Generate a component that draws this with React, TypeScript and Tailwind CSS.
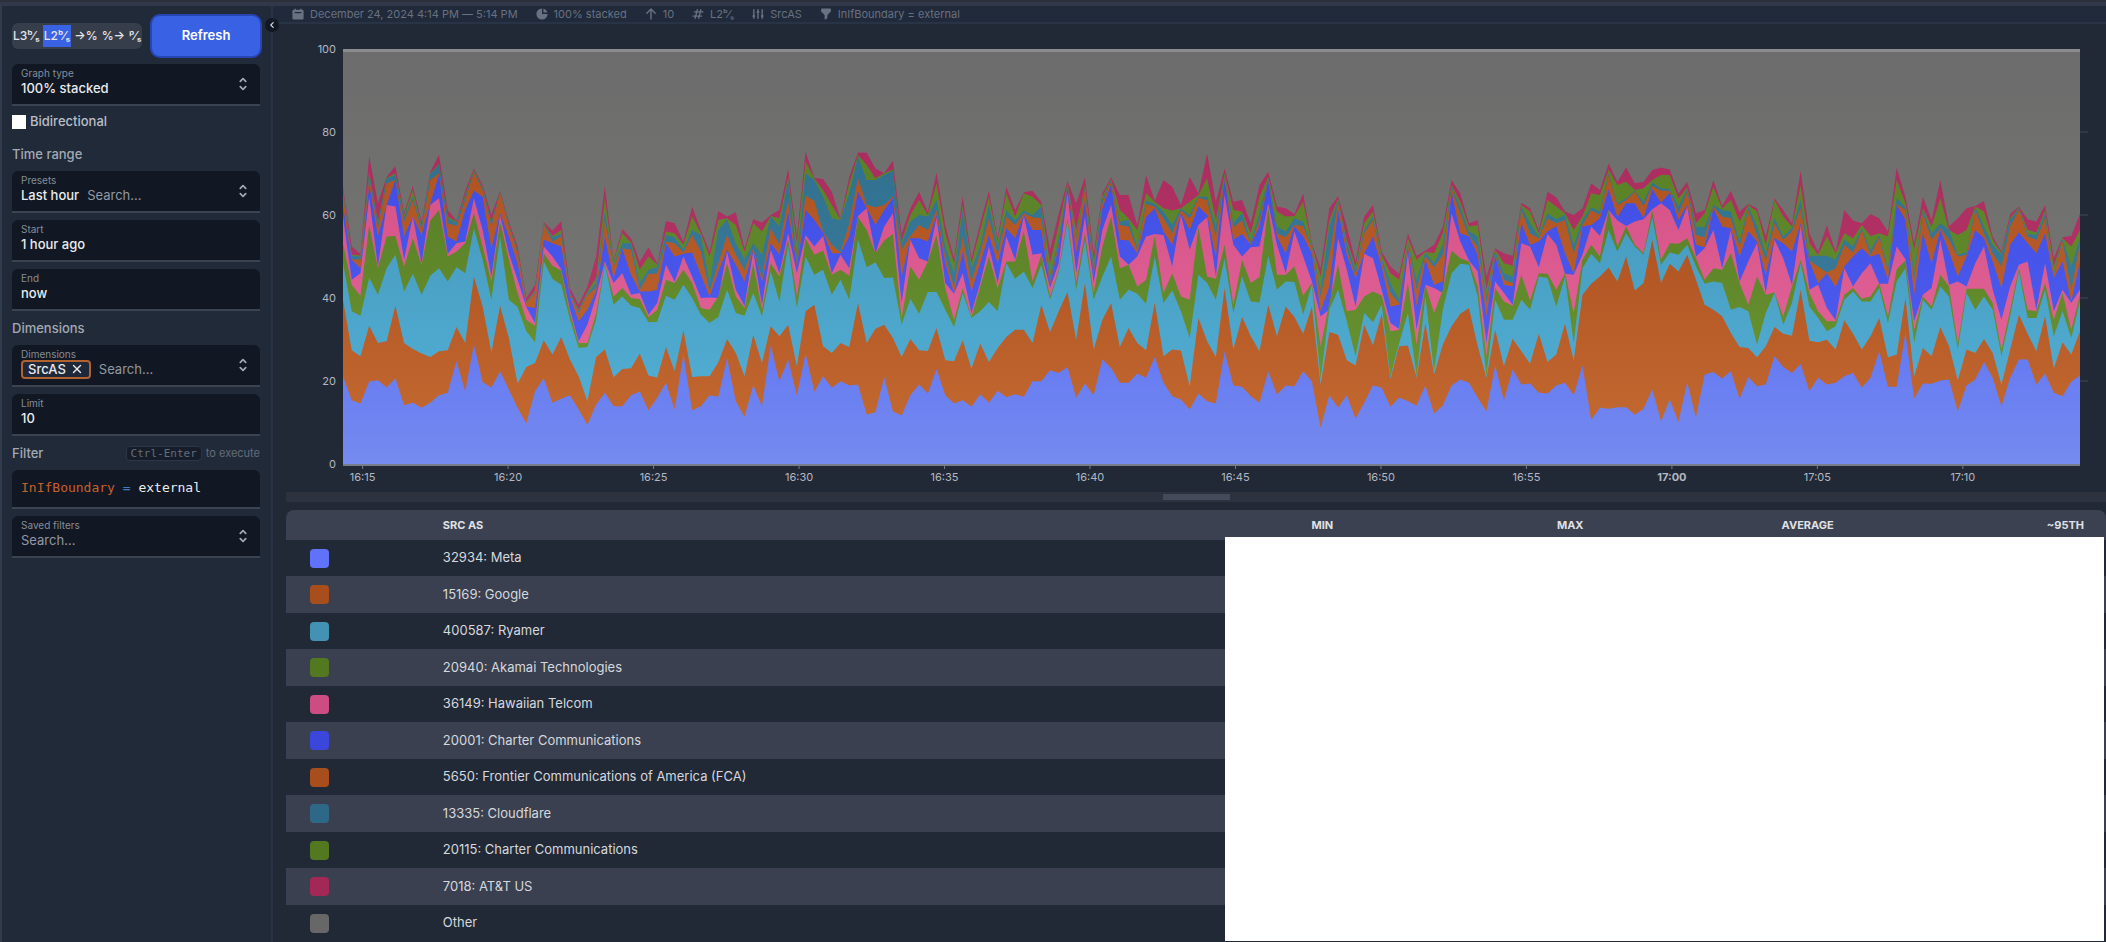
import React from 'react'
import {
  HiAdjustments,
  HiArrowUp,
  HiCalendar,
  HiChartPie,
  HiChevronLeft,
  HiFilter,
  HiHashtag,
  HiSelector,
  HiX,
} from 'react-icons/hi'

// upper edge of each stacked band, one value per sample, FULL_SCALE being 100%
const FULL_SCALE = 1248
const LAST_SAMPLE = 199

const bands = [
  {
    id: 'att',
    from: '#ab2d5f',
    to: '#be3a70',
    levels: [
      834, 654, 632, 926, 784, 864, 896, 756, 837, 729, 879, 930, 764, 732, 822, 889, 839, 749, 822, 729, 654, 499, 539, 727,
      702, 730, 529, 479, 534, 624, 837, 614, 707, 679, 609, 652, 604, 731, 724, 669, 774, 704, 639, 761, 744, 757, 649, 737,
      726, 749, 764, 887, 684, 939, 861, 857, 819, 739, 864, 937, 936, 889, 874, 912, 694, 769, 819, 759, 876, 719, 619, 807,
      619, 724, 822, 679, 834, 764, 817, 822, 789, 644, 754, 851, 784, 862, 634, 814, 862, 809, 809, 719, 869, 792, 854, 834,
      779, 864, 814, 934, 789, 889, 789, 794, 724, 839, 879, 774, 769, 752, 814, 664, 589, 769, 806, 714, 609, 744, 779, 639,
      594, 572, 694, 626, 642, 659, 714, 854, 814, 724, 734, 564, 649, 634, 626, 786, 769, 704, 819, 802, 759, 749, 769, 844,
      824, 904, 849, 892, 844, 849, 884, 892, 886, 814, 849, 754, 764, 854, 776, 822, 759, 782, 769, 684, 799, 764, 724, 882,
      694, 639, 719, 639, 764, 732, 724, 752, 739, 699, 891, 804, 664, 804, 734, 854, 714, 739, 769, 776, 791, 684, 639, 752,
      774, 736, 729, 779, 619, 682, 686, 754,
    ],
  },
  {
    id: 'charter-20115',
    from: '#5a8127',
    to: '#6a9432',
    levels: [
      824, 629, 627, 879, 729, 861, 874, 749, 824, 719, 874, 902, 744, 729, 809, 884, 832, 729, 818, 721, 642, 489, 522, 723,
      686, 704, 516, 464, 519, 559, 799, 609, 694, 666, 584, 624, 599, 699, 694, 659, 744, 694, 624, 734, 739, 719, 639, 724,
      699, 746, 739, 864, 664, 909, 859, 824, 779, 736, 844, 929, 899, 859, 874, 886, 669, 749, 794, 749, 844, 694, 604, 779,
      604, 704, 804, 669, 814, 744, 814, 804, 779, 604, 719, 844, 704, 839, 614, 804, 857, 764, 739, 704, 814, 789, 769, 762,
      769, 789, 809, 859, 734, 874, 764, 759, 694, 804, 864, 759, 744, 746, 789, 659, 564, 734, 799, 674, 594, 724, 759, 629,
      574, 554, 679, 614, 638, 634, 694, 839, 789, 714, 719, 524, 644, 604, 596, 779, 759, 694, 794, 774, 754, 704, 744, 814,
      809, 886, 839, 849, 824, 829, 854, 869, 869, 799, 832, 724, 754, 834, 768, 794, 729, 779, 759, 659, 794, 744, 714, 839,
      664, 629, 684, 634, 694, 679, 719, 686, 694, 684, 854, 784, 644, 769, 714, 799, 704, 689, 704, 774, 759, 674, 634, 739,
      771, 704, 696, 764, 594, 679, 654, 704,
    ],
  },
  {
    id: 'cloudflare',
    from: '#31708f',
    to: '#4187a8',
    levels: [
      819, 626, 624, 874, 724, 859, 869, 744, 804, 714, 872, 899, 739, 726, 804, 879, 829, 724, 816, 719, 639, 486, 519, 721,
      682, 692, 514, 459, 514, 544, 759, 599, 664, 664, 544, 584, 592, 689, 682, 644, 704, 689, 544, 704, 736, 664, 616, 664,
      629, 744, 714, 854, 624, 874, 854, 804, 739, 734, 814, 924, 854, 854, 869, 882, 664, 729, 749, 744, 794, 654, 574, 764,
      589, 654, 779, 654, 764, 732, 762, 749, 774, 564, 679, 839, 684, 829, 594, 794, 854, 729, 734, 654, 792, 782, 759, 719,
      769, 749, 804, 804, 714, 864, 724, 754, 669, 754, 859, 714, 699, 739, 729, 654, 524, 714, 794, 664, 584, 704, 744, 619,
      544, 494, 669, 554, 636, 604, 659, 834, 774, 699, 684, 504, 639, 574, 564, 774, 724, 684, 754, 736, 749, 659, 734, 771,
      759, 874, 784, 799, 821, 789, 846, 829, 826, 774, 826, 714, 712, 779, 764, 759, 669, 774, 714, 634, 739, 684, 709, 794,
      626, 626, 626, 614, 674, 654, 709, 644, 689, 589, 799, 772, 574, 764, 694, 724, 704, 629, 636, 772, 714, 659, 629, 734,
      768, 692, 689, 754, 574, 676, 594, 679,
    ],
  },
  {
    id: 'frontier',
    from: '#b05422',
    to: '#c26a32',
    levels: [
      814, 616, 614, 859, 709, 844, 854, 729, 794, 704, 854, 874, 724, 716, 794, 876, 824, 714, 814, 714, 634, 484, 514, 719,
      669, 684, 509, 454, 509, 530, 734, 594, 649, 644, 524, 571, 574, 669, 664, 636, 689, 639, 519, 604, 689, 629, 584, 649,
      559, 709, 659, 792, 604, 807, 792, 699, 659, 636, 724, 859, 779, 772, 779, 804, 644, 686, 719, 704, 764, 624, 534, 684,
      549, 634, 739, 629, 744, 719, 754, 742, 739, 549, 664, 834, 674, 824, 574, 784, 849, 719, 714, 644, 782, 774, 739, 694,
      764, 739, 801, 794, 684, 859, 712, 732, 662, 734, 854, 694, 682, 719, 716, 649, 504, 624, 789, 644, 569, 694, 734, 609,
      514, 484, 664, 524, 626, 592, 629, 829, 754, 686, 654, 484, 629, 554, 544, 764, 694, 679, 739, 724, 734, 634, 719, 764,
      749, 869, 779, 794, 819, 776, 836, 822, 822, 754, 819, 689, 682, 774, 744, 739, 654, 764, 689, 614, 724, 674, 699, 769,
      612, 594, 576, 589, 659, 636, 704, 629, 682, 579, 782, 764, 554, 754, 674, 709, 674, 624, 629, 764, 694, 634, 594, 714,
      764, 684, 674, 739, 569, 669, 524, 664,
    ],
  },
  {
    id: 'charter-20001',
    from: '#404ee6',
    to: '#5666f2',
    levels: [
      774, 614, 589, 839, 684, 779, 854, 684, 744, 689, 784, 869, 684, 669, 764, 822, 804, 649, 754, 684, 604, 474, 469, 674,
      664, 654, 504, 429, 464, 519, 684, 559, 649, 569, 519, 519, 524, 664, 624, 632, 636, 569, 504, 579, 644, 599, 549, 644,
      549, 664, 629, 756, 594, 764, 734, 696, 634, 634, 684, 819, 770, 719, 764, 799, 564, 679, 679, 669, 749, 604, 514, 639,
      519, 604, 689, 604, 709, 679, 749, 704, 704, 539, 654, 829, 634, 789, 564, 769, 839, 674, 672, 634, 742, 769, 699, 659,
      754, 704, 774, 749, 624, 854, 674, 692, 659, 714, 849, 684, 634, 714, 684, 634, 459, 534, 764, 629, 559, 634, 684, 594,
      474, 479, 649, 474, 614, 539, 549, 819, 694, 684, 629, 444, 624, 539, 534, 724, 659, 669, 699, 716, 634, 572, 714, 719,
      739, 826, 742, 784, 784, 739, 826, 786, 816, 734, 779, 659, 652, 769, 714, 709, 624, 699, 669, 569, 679, 664, 639, 724,
      609, 544, 574, 532, 594, 624, 649, 624, 632, 554, 779, 734, 509, 694, 604, 704, 639, 564, 624, 704, 679, 609, 529, 659,
      696, 664, 634, 694, 559, 609, 489, 609,
    ],
  },
  {
    id: 'hawaiian',
    from: '#d65488',
    to: '#ea6ba2',
    levels: [
      744, 554, 574, 804, 594, 779, 774, 614, 744, 604, 779, 799, 632, 664, 669, 799, 704, 564, 749, 634, 554, 472, 424, 654,
      624, 586, 464, 369, 419, 504, 609, 544, 574, 509, 514, 449, 484, 599, 549, 624, 564, 499, 501, 499, 639, 524, 476, 639,
      479, 644, 574, 694, 574, 689, 654, 686, 574, 629, 589, 746, 769, 634, 714, 754, 484, 674, 619, 609, 742, 544, 512, 574,
      454, 544, 654, 544, 684, 614, 746, 629, 634, 529, 604, 814, 574, 744, 544, 704, 779, 624, 599, 624, 684, 692, 689, 594,
      749, 644, 719, 742, 564, 809, 659, 624, 652, 654, 784, 659, 574, 699, 624, 549, 444, 464, 679, 584, 474, 632, 619, 524,
      424, 406, 634, 404, 539, 529, 514, 754, 669, 612, 579, 364, 549, 514, 479, 664, 654, 592, 692, 659, 572, 569, 629, 714,
      686, 764, 732, 716, 729, 736, 766, 784, 764, 704, 774, 624, 649, 704, 589, 704, 549, 609, 664, 514, 674, 619, 539, 719,
      524, 539, 469, 432, 589, 534, 574, 604, 542, 542, 654, 616, 429, 509, 529, 674, 539, 549, 534, 604, 654, 524, 434, 534,
      599, 609, 464, 604, 459, 524, 484, 524,
    ],
  },
  {
    id: 'akamai',
    from: '#5a8127',
    to: '#719c36',
    levels: [
      664, 539, 506, 719, 589, 684, 686, 594, 679, 599, 732, 764, 624, 639, 664, 754, 654, 549, 729, 614, 514, 434, 416, 634,
      596, 582, 454, 364, 364, 454, 604, 504, 529, 499, 496, 442, 464, 554, 544, 584, 544, 469, 464, 504, 604, 504, 469, 604,
      464, 604, 564, 674, 504, 679, 629, 642, 569, 584, 566, 742, 704, 634, 672, 692, 439, 594, 554, 609, 689, 529, 434, 529,
      442, 534, 624, 529, 609, 609, 699, 549, 629, 504, 584, 739, 544, 694, 514, 654, 744, 589, 599, 534, 554, 686, 514, 574,
      504, 494, 712, 564, 557, 659, 479, 614, 544, 562, 772, 569, 569, 594, 507, 544, 354, 484, 599, 459, 464, 504, 519, 507,
      399, 404, 544, 359, 539, 454, 524, 642, 619, 609, 534, 324, 529, 489, 476, 569, 492, 574, 572, 524, 574, 454, 614, 659,
      624, 764, 654, 714, 659, 634, 762, 614, 664, 662, 679, 619, 554, 589, 584, 634, 544, 479, 564, 509, 516, 444, 534, 614,
      514, 459, 429, 429, 509, 529, 497, 504, 544, 444, 586, 612, 404, 504, 474, 569, 534, 364, 527, 527, 527, 484, 344, 464,
      589, 464, 459, 544, 434, 514, 404, 509,
    ],
  },
  {
    id: 'ryamer',
    from: '#479bc0',
    to: '#55b4d9',
    levels: [
      604, 459, 446, 559, 509, 589, 629, 519, 572, 509, 566, 589, 549, 592, 574, 709, 614, 494, 684, 494, 472, 399, 366, 609,
      556, 539, 434, 349, 352, 434, 599, 479, 504, 476, 469, 426, 428, 506, 494, 539, 499, 449, 424, 442, 524, 454, 446, 514,
      444, 579, 489, 659, 469, 624, 569, 584, 509, 554, 494, 674, 592, 607, 559, 561, 419, 496, 452, 517, 517, 464, 412, 514,
      439, 459, 487, 459, 604, 557, 579, 529, 599, 494, 579, 729, 524, 674, 494, 564, 624, 494, 524, 512, 482, 624, 484, 522,
      459, 379, 569, 544, 494, 619, 454, 564, 489, 486, 626, 524, 549, 547, 449, 539, 254, 464, 524, 429, 324, 454, 426, 479,
      264, 364, 454, 264, 504, 279, 464, 574, 602, 599, 504, 264, 494, 434, 434, 494, 464, 564, 559, 474, 564, 364, 589, 632,
      604, 704, 639, 694, 654, 629, 742, 599, 636, 629, 659, 594, 542, 549, 544, 464, 472, 459, 359, 454, 514, 419, 484, 604,
      474, 439, 399, 414, 494, 519, 489, 489, 529, 424, 549, 589, 364, 494, 464, 534, 504, 344, 514, 464, 504, 464, 324, 444,
      579, 439, 439, 524, 384, 459, 379, 489,
    ],
  },
  {
    id: 'google',
    from: '#b05422',
    to: '#c66c33',
    levels: [
      494, 342, 324, 416, 364, 369, 476, 364, 346, 332, 322, 339, 342, 412, 364, 562, 474, 336, 476, 379, 242, 292, 304, 372,
      329, 382, 314, 264, 189, 322, 344, 261, 286, 288, 332, 266, 260, 352, 279, 402, 262, 264, 264, 306, 376, 334, 264, 389,
      304, 414, 384, 419, 294, 459, 479, 354, 334, 364, 352, 484, 364, 407, 419, 379, 322, 376, 342, 340, 409, 312, 309, 372,
      287, 362, 307, 349, 382, 404, 404, 364, 479, 397, 459, 517, 374, 544, 344, 434, 484, 352, 409, 364, 342, 486, 324, 344,
      341, 234, 439, 369, 322, 529, 344, 442, 384, 339, 479, 384, 474, 442, 392, 474, 239, 397, 389, 312, 296, 419, 357, 452,
      256, 354, 356, 259, 424, 269, 359, 414, 452, 469, 354, 259, 404, 294, 377, 339, 302, 392, 307, 329, 422, 312, 509, 542,
      564, 591, 549, 624, 522, 544, 674, 544, 602, 579, 629, 554, 479, 464, 444, 394, 352, 349, 321, 354, 412, 392, 386, 524,
      371, 366, 374, 344, 432, 392, 344, 384, 439, 321, 329, 499, 264, 349, 324, 412, 354, 252, 344, 334, 376, 334, 239, 344,
      449, 392, 339, 444, 287, 366, 329, 399,
    ],
  },
  {
    id: 'meta',
    from: '#6377f3',
    to: '#758bee',
    levels: [
      264, 192, 182, 248, 252, 230, 258, 177, 184, 169, 184, 207, 214, 309, 219, 359, 246, 230, 279, 224, 169, 122, 219, 258,
      184, 196, 207, 164, 118, 179, 214, 174, 174, 207, 218, 162, 199, 244, 164, 329, 162, 174, 207, 202, 319, 189, 142, 237,
      174, 356, 249, 314, 206, 332, 217, 264, 229, 249, 236, 239, 149, 156, 262, 159, 146, 207, 239, 212, 286, 207, 182, 192,
      172, 210, 184, 220, 201, 210, 202, 249, 249, 282, 274, 292, 199, 242, 207, 314, 289, 244, 244, 272, 259, 322, 244, 204,
      194, 164, 212, 189, 182, 339, 236, 232, 204, 184, 279, 209, 236, 234, 279, 249, 109, 207, 169, 207, 137, 184, 237, 229,
      172, 200, 189, 176, 236, 152, 176, 236, 254, 244, 199, 159, 296, 192, 284, 239, 242, 214, 212, 236, 244, 207, 296, 132,
      169, 166, 171, 171, 148, 166, 224, 128, 194, 126, 246, 139, 269, 277, 257, 279, 196, 262, 234, 239, 324, 292, 274, 301,
      219, 259, 239, 244, 264, 274, 229, 259, 339, 232, 232, 394, 197, 242, 241, 251, 254, 159, 236, 254, 307, 259, 174, 259,
      314, 314, 239, 272, 214, 204, 247, 266,
    ],
  },
]

const rows = [
  { name: '32934: Meta', swatch: 'bg-[#6072fa]' },
  { name: '15169: Google', swatch: 'bg-[#a74e1c]' },
  { name: '400587: Ryamer', swatch: 'bg-[#4392b4]' },
  { name: '20940: Akamai Technologies', swatch: 'bg-[#527820]' },
  { name: '36149: Hawaiian Telcom', swatch: 'bg-[#cd4c81]' },
  { name: '20001: Charter Communications', swatch: 'bg-[#3b47da]' },
  { name: '5650: Frontier Communications of America (FCA)', swatch: 'bg-[#a74e1c]' },
  { name: '13335: Cloudflare', swatch: 'bg-[#2d6886]' },
  { name: '20115: Charter Communications', swatch: 'bg-[#527820]' },
  { name: '7018: AT&T US', swatch: 'bg-[#a32855]' },
  { name: 'Other', swatch: 'bg-[#676767]' },
]

const timeTicks = ['16:15', '16:20', '16:25', '16:30', '16:35', '16:40', '16:45', '16:50', '16:55', '17:00', '17:05', '17:10']

const units = ['L3ᵇ⁄ₛ', 'L2ᵇ⁄ₛ', '→%', '%→', 'ᵖ⁄ₛ']

const summary = [
  { icon: HiCalendar, text: 'December 24, 2024 4:14 PM — 5:14 PM' },
  { icon: HiChartPie, text: '100% stacked' },
  { icon: HiArrowUp, text: '10' },
  { icon: HiHashtag, text: 'L2ᵇ⁄ₛ' },
  { icon: HiAdjustments, text: 'SrcAS' },
  { icon: HiFilter, text: 'InIfBoundary = external' },
]

const bandPath = (levels: number[]) =>
  `M0 ${FULL_SCALE}` + levels.map((level, i) => `L${i} ${FULL_SCALE - level}`).join('') + `L${LAST_SAMPLE} ${FULL_SCALE}Z`

type FieldProps = {
  id: string
  label: string
  selector?: boolean
  children: React.ReactNode
}

const Field = ({ id, label, selector, children }: FieldProps) => (
  <div className="flex h-[42px] items-center rounded-t-md border-b-2 border-[#3b4351] bg-[#111824] pl-[9px] pr-2">
    <div className="flex min-w-0 flex-1 flex-col pb-1">
      <label htmlFor={id} className="text-[10px] leading-3 text-[#868c97]">{label}</label>
      <div className="flex h-[18px] items-center gap-2 text-[13px] leading-[18px] font-medium text-[#e9ebee]">{children}</div>
    </div>
    {selector && <HiSelector className="size-[18px] text-[#a4a9b2]" />}
  </div>
)

const Heading = ({ children }: { children: React.ReactNode }) => (
  <h2 className="text-[13px] leading-5 font-medium text-[#a3a9b4]">{children}</h2>
)

const inputClass = 'w-full min-w-0 flex-1 bg-transparent outline-none placeholder:font-normal placeholder:text-[#9298a3]'

const Sidebar = () => (
  <aside className="relative w-[273px] shrink-0 border-r-2 border-l-2 border-r-[#2a3345] border-l-[#323b4c] bg-[#212a39]">
    <form className="flex flex-col gap-[7px] pt-[9px] pr-[11px] pl-[10px]" onSubmit={(event) => event.preventDefault()}>
      <div className="flex h-[42px] items-center justify-between">
        <div className="flex h-[26px] items-center gap-0.5 rounded-md bg-[#363d4b] text-[12px] font-medium text-[#e3e5e9]">
          {units.map((unit, i) => (
            <button
              key={unit}
              type="button"
              className={i === 1 ? 'h-[22px] bg-[#3a62e4] px-px' : 'h-[22px] px-px'}
            >
              {unit}
            </button>
          ))}
        </div>
        <button
          type="submit"
          className="h-10 w-[108px] rounded-lg bg-[#3861e4] text-[13px] font-semibold text-white ring-2 ring-[#2845b4]"
        >
          Refresh
        </button>
      </div>
      <Field id="graph-type" label="Graph type" selector>
        <select id="graph-type" className="w-full appearance-none bg-transparent outline-none">
          <option>100% stacked</option>
        </select>
      </Field>
      <label className="flex h-[18px] items-center gap-1 text-[13px] font-medium text-[#b9bec6]">
        <input type="checkbox" className="size-[14px] appearance-none bg-white" />
        Bidirectional
      </label>
      <div className="pt-1.5">
        <Heading>Time range</Heading>
      </div>
      <Field id="presets" label="Presets" selector>
        <span className="whitespace-nowrap">Last hour</span>
        <input id="presets" className={inputClass} placeholder="Search..." />
      </Field>
      <Field id="start" label="Start">
        <input id="start" className={inputClass} defaultValue="1 hour ago" />
      </Field>
      <Field id="end" label="End">
        <input id="end" className={inputClass} defaultValue="now" />
      </Field>
      <Heading>Dimensions</Heading>
      <Field id="dimensions" label="Dimensions" selector>
        <span className="flex h-[19px] items-center gap-1 rounded-sm border-2 border-[#b0622f] bg-[#1e2838] px-[5px]">
          SrcAS
          <button type="button" aria-label="Remove SrcAS">
            <HiX className="size-3.5" />
          </button>
        </span>
        <input id="dimensions" className={inputClass} placeholder="Search..." />
      </Field>
      <Field id="limit" label="Limit">
        <input id="limit" className={inputClass} defaultValue="10" />
      </Field>
      <div className="flex items-center justify-between">
        <Heading>Filter</Heading>
        <p className="flex items-center gap-1 text-[11px] leading-4 text-[#646c79]">
          <kbd className="rounded-sm border border-[#2d3646] bg-[#151d2a] px-1 font-['DejaVu_Sans_Mono',monospace] text-[11px] leading-[13px]">
            Ctrl-Enter
          </kbd>
          to execute
        </p>
      </div>
      <div
        role="textbox"
        aria-label="Filter"
        contentEditable
        suppressContentEditableWarning
        className="h-[39px] rounded-t-md border-b-2 border-[#3b4351] bg-[#111824] px-[9px] font-['DejaVu_Sans_Mono',monospace] text-[13px] leading-9 text-[#e9ebee] outline-none"
      >
        <span className="text-[#c6602a]">InIfBoundary</span> <span className="text-[#3a7dc4]">=</span> external
      </div>
      <Field id="saved-filters" label="Saved filters" selector>
        <input id="saved-filters" className={inputClass} placeholder="Search..." />
      </Field>
    </form>
    <button
      type="button"
      aria-label="Collapse options"
      className="absolute top-3 -right-2 z-10 flex size-[14px] items-center justify-center rounded-full bg-[#111824] text-[#d5d8dd]"
    >
      <HiChevronLeft className="size-3" />
    </button>
  </aside>
)

const Chart = () => (
  <div className="pt-[25px] pr-[26px] pb-7 pl-[70px]">
    <svg className="block h-[415px] w-full overflow-visible" role="img" aria-label="Traffic by source AS">
      <defs>
        <linearGradient id="band-other" x1="0" y1="0" x2="0" y2="1">
          <stop offset="0" stopColor="#6c6c6c" />
          <stop offset="0.6" stopColor="#747572" />
        </linearGradient>
        {bands.map(({ id, from, to }) => (
          <linearGradient key={id} id={`band-${id}`} x1="0" y1="0" x2="0" y2="1">
            <stop offset="0" stopColor={from} />
            <stop offset="1" stopColor={to} />
          </linearGradient>
        ))}
        <marker id="grid-end" viewBox="0 0 8 2" refX="0" refY="1" markerWidth="8" markerHeight="2" markerUnits="userSpaceOnUse">
          <path d="M0 0h8v2h-8z" fill="#323843" />
        </marker>
      </defs>
      {[80, 60, 40, 20].map((tick) => (
        <line key={tick} x1="0" x2="100%" y1={`${100 - tick}%`} y2={`${100 - tick}%`} stroke="#323843" strokeWidth="2" markerEnd="url(#grid-end)" />
      ))}
      <svg width="100%" height="100%" viewBox={`0 0 ${LAST_SAMPLE} ${FULL_SCALE}`} preserveAspectRatio="none">
        <rect width={LAST_SAMPLE} height={FULL_SCALE} fill="url(#band-other)" />
        {bands.map(({ id, levels }) => (
          <path key={id} d={bandPath(levels)} fill={`url(#band-${id})`} />
        ))}
      </svg>
      <rect width="100%" height="3" fill="#8b8b8e" />
      <rect y="100%" width="100%" height="2" fill="#777d8c" />
      <g fontSize="11" fill="#b4b7c3">
        {[100, 80, 60, 40, 20, 0].map((tick) => (
          <text key={tick} x="-7" y={`${100 - tick}%`} dy="4" textAnchor="end">{tick}</text>
        ))}
        {timeTicks.map((tick, i) => {
          const x = `${1.13 + i * 8.375}%`
          return (
            <React.Fragment key={tick}>
              <line x1={x} x2={x} y1="415" y2="420" stroke="#777d8c" />
              <text x={x} y="432" textAnchor="middle" fontWeight={tick === '17:00' ? 700 : 400}>{tick}</text>
            </React.Fragment>
          )
        })}
      </g>
    </svg>
  </div>
)

const DataTable = () => (
  <div className="relative overflow-hidden rounded-t-lg">
    <table className="w-full table-fixed text-left text-[13px] text-[#d5d8de]">
      <colgroup>
        <col className="w-[7.3%]" />
        <col className="w-[37.7%]" />
        <col />
        <col />
        <col />
        <col />
      </colgroup>
      <thead className="h-[30px] bg-[#3b4150] text-[11px] text-[#e0e2e6]">
        <tr>
          <th className="px-6" />
          <th className="px-6 font-bold">SRC AS</th>
          <th className="pr-[22px] text-right font-bold">MIN</th>
          <th className="pr-[22px] text-right font-bold">MAX</th>
          <th className="pr-[22px] text-right font-bold">AVERAGE</th>
          <th className="pr-[22px] text-right font-bold">~95TH</th>
        </tr>
      </thead>
      <tbody>
        {rows.map(({ name, swatch }) => (
          <tr key={name} className="h-9 odd:bg-[#222936] even:h-[37px] even:bg-[#3a404f]">
            <td className="px-6">
              <div className={`size-[19px] rounded ${swatch}`} />
            </td>
            <td className="px-6">{name}</td>
            <td colSpan={4} />
          </tr>
        ))}
      </tbody>
    </table>
    {/* figures are masked */}
    <div className="absolute top-[27px] right-[2px] bottom-0 left-[51.6%] bg-white" />
  </div>
)

const App = () => (
  <div className="flex min-h-screen flex-col bg-[#222936] font-['Inter','DejaVu_Sans',sans-serif]">
    <div className="h-1.5 border-b-4 border-[#323849] bg-[#2b303a]" />
    <div className="flex flex-1">
      <Sidebar />
      <main className="flex min-w-0 flex-1 flex-col">
        <header className="flex h-[18px] items-center gap-[17px] border-b-2 border-[#283346] bg-[#202a3b] pl-[18px] text-[11px] text-[#687180]">
          {summary.map(({ icon: Icon, text }) => (
            <span key={text} className="flex items-center gap-[5px] whitespace-nowrap">
              <Icon className="size-[14px]" />
              {text}
            </span>
          ))}
        </header>
        <Chart />
        <div className="ml-[13px]">
          <div className="mb-2 flex h-2.5 items-center justify-center bg-[#2d333e]">
            <div className="h-1.5 w-[67px] bg-[#434b5b]" />
          </div>
          <DataTable />
        </div>
      </main>
    </div>
  </div>
)

export default App
